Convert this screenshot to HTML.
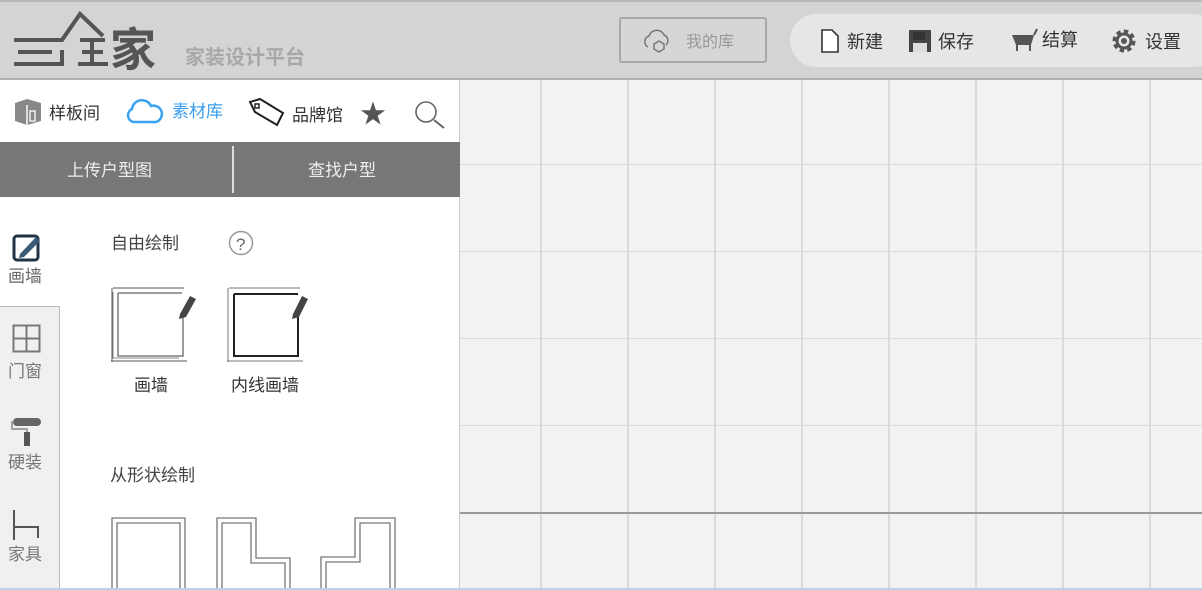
<!DOCTYPE html>
<html><head><meta charset="utf-8"><style>
*{margin:0;padding:0;box-sizing:border-box}
body{width:1202px;height:590px;overflow:hidden;position:relative;background:#f2f2f2;font-family:"Liberation Sans","Noto Sans CJK SC",sans-serif;}
.hdr{position:absolute;left:0;top:0;width:1202px;height:80px;background:#d4d4d4;border-top:2px solid #b8b8b8;border-bottom:2px solid #b0b0b0}
.canvas{position:absolute;left:460px;top:80px;right:0;bottom:2px;
background-image:linear-gradient(to right,#dadada 2px,transparent 2px),linear-gradient(to bottom,#dadada 1px,transparent 1px);
background-size:87px 87px;background-position:80px 84px}
.side{position:absolute;left:0;top:80px;width:460px;height:508px;background:#fff;border-right:1px solid #ccc}
.abs{position:absolute}
.t{position:absolute;white-space:nowrap;margin-top:-3px}
</style></head><body>
<div class="hdr"></div>
<svg class="abs" style="left:0;top:0" width="170" height="78">
<g stroke="#555" stroke-width="4" fill="none">
<path d="M14 40H62L80 14L103 36"/>
<path d="M18 52H52"/>
<path d="M14 64H62V50"/>
<path d="M80 40H105M82 52H103M78 64H108M92 40V64"/>
</g>
<text x="110" y="66" font-size="46" font-weight="bold" fill="#555" font-family="Noto Sans CJK SC">家</text>
</svg>
<div class="t" style="left:185px;top:44px;font-size:20px;font-weight:bold;color:#a8a8a8">家装设计平台</div>
<div class="abs" style="left:619px;top:17px;width:148px;height:46px;border:2px solid #a8a8a8;border-radius:3px;background:#d6d6d6"></div>
<svg class="abs" style="left:640px;top:27px" width="36" height="26"><path d="M8 20a6 6 0 0 1 1-11a8 8 0 0 1 15-1a6 6 0 0 1 2 10" fill="none" stroke="#777" stroke-width="1.5"/><path d="M19 14l5 3v5l-5 3l-5-3v-5z" fill="none" stroke="#777" stroke-width="1.5"/></svg>
<div class="t" style="left:686px;top:31px;font-size:16px;color:#999">我的库</div>
<div class="abs" style="left:790px;top:14px;width:430px;height:53px;border-radius:27px;background:#e6e6e6"></div>
<svg class="abs" style="left:820px;top:28px" width="20" height="26"><path d="M2 2H12L18 8V24H2Z" fill="#fff" stroke="#333" stroke-width="1.6"/></svg>
<div class="t" style="left:847px;top:31px;font-size:18px;color:#333">新建</div>
<svg class="abs" style="left:908px;top:29px" width="24" height="24"><rect x="1" y="1" width="22" height="22" fill="#444"/><rect x="5" y="3" width="12" height="8" fill="#333"/><rect x="5" y="14" width="14" height="9" fill="#ddd"/></svg>
<div class="t" style="left:938px;top:31px;font-size:18px;color:#333">保存</div>
<svg class="abs" style="left:1010px;top:27px" width="30" height="26"><path d="M2 8H24L21 18H6Z" fill="#555"/><path d="M24 8L27 2" stroke="#555" stroke-width="2"/><path d="M7 18V24M20 18V24" stroke="#555" stroke-width="2"/></svg>
<div class="t" style="left:1042px;top:29px;font-size:18px;color:#333">结算</div>
<svg class="abs" style="left:1111px;top:28px" width="26" height="26"><circle cx="13" cy="13" r="9" fill="none" stroke="#555" stroke-width="5" stroke-dasharray="4 3"/><circle cx="13" cy="13" r="7" fill="none" stroke="#555" stroke-width="3"/><circle cx="13" cy="13" r="3" fill="#555"/></svg>
<div class="t" style="left:1145px;top:31px;font-size:18px;color:#333">设置</div>

<div class="canvas"></div>
<div class="abs" style="left:460px;top:512px;width:742px;height:2px;background:#999"></div>
<div class="side"></div>
<svg class="abs" style="left:13px;top:97px" width="30" height="30"><path d="M2 6L14 2L28 6V24L14 28L2 24Z" fill="#888"/><path d="M14 8V28" stroke="#ddd" stroke-width="2"/><rect x="17" y="14" width="5" height="10" fill="none" stroke="#eee" stroke-width="1.5"/></svg>
<div class="t" style="left:49px;top:102px;font-size:17px;color:#333">样板间</div>
<svg class="abs" style="left:124px;top:96px" width="42" height="30"><path d="M9 26a7 7 0 0 1-1-13a10 10 0 0 1 19-3a8 8 0 0 1 5 16Z" fill="none" stroke="#3aa3f0" stroke-width="2.5"/></svg>
<div class="t" style="left:172px;top:100px;font-size:17px;color:#3a9ff0">素材库</div>
<svg class="abs" style="left:247px;top:97px" width="40" height="32"><path d="M3 5L13 2L36 16L30 28L8 15Z" fill="none" stroke="#222" stroke-width="2"/><rect x="8" y="7" width="4" height="4" fill="none" stroke="#222" stroke-width="1.5"/></svg>
<div class="t" style="left:292px;top:104px;font-size:17px;color:#333">品牌馆</div>
<div class="t" style="left:360px;top:97px;font-size:26px;color:#555">★</div>
<svg class="abs" style="left:411px;top:99px" width="36" height="30"><circle cx="15" cy="13" r="10" fill="none" stroke="#666" stroke-width="1.6"/><path d="M23 21L33 29" stroke="#666" stroke-width="2"/></svg>
<div class="abs" style="left:0;top:142px;width:460px;height:55px;background:#777"></div>
<div class="abs" style="left:232px;top:146px;width:2px;height:47px;background:#ddd"></div>
<div class="t" style="left:67px;top:159px;font-size:17px;color:#eee">上传户型图</div>
<div class="t" style="left:308px;top:159px;font-size:17px;color:#eee">查找户型</div>

<div class="abs" style="left:0;top:306px;width:60px;height:282px;background:#f0f0f0;border-top:1px solid #bbb;border-right:1px solid #bbb"></div>
<svg class="abs" style="left:12px;top:232px" width="30" height="30"><rect x="2" y="4" width="24" height="24" rx="3" fill="none" stroke="#234" stroke-width="3"/><path d="M8 22L24 5L28 9L12 25L7 26Z" fill="#3a5a78"/></svg>
<div class="t" style="left:8px;top:265px;font-size:17px;color:#666">画墙</div>
<svg class="abs" style="left:12px;top:324px" width="30" height="30"><rect x="1.5" y="1.5" width="26" height="26" fill="none" stroke="#777" stroke-width="2"/><path d="M14.5 1V28M1 14.5H28" stroke="#777" stroke-width="2"/></svg>
<div class="t" style="left:8px;top:360px;font-size:17px;color:#777">门窗</div>
<svg class="abs" style="left:10px;top:416px" width="34" height="32"><rect x="3" y="2" width="28" height="8" rx="4" fill="#666"/><path d="M4 6H2V13H17V16" fill="none" stroke="#888" stroke-width="1.5"/><rect x="14" y="16" width="6" height="14" fill="#555"/></svg>
<div class="t" style="left:8px;top:451px;font-size:17px;color:#777">硬装</div>
<svg class="abs" style="left:10px;top:508px" width="34" height="34"><path d="M4 2V32M4 19H28V30" fill="none" stroke="#555" stroke-width="2"/></svg>
<div class="t" style="left:8px;top:543px;font-size:17px;color:#777">家具</div>

<div class="t" style="left:111px;top:232px;font-size:17px;color:#444">自由绘制</div>
<svg class="abs" style="left:228px;top:230px" width="28" height="28"><circle cx="13" cy="13" r="11.5" fill="none" stroke="#999" stroke-width="1.5"/><text x="8" y="20" font-size="17" fill="#666" font-family="Liberation Sans">?</text></svg>
<svg class="abs" style="left:110px;top:286px" width="92" height="78">
<path d="M3 2H74M2 2V76M1 75H77" stroke="#555" stroke-width="1"/>
<path d="M8 7H72M8 7V70H73V30" fill="none" stroke="#666" stroke-width="1.3"/>
<path d="M3 6V72H69" fill="none" stroke="#888" stroke-width="1"/>
<path d="M70 28L80 10L86 13L76 31L69 33Z" fill="#444"/>
</svg>
<svg class="abs" style="left:226px;top:286px" width="92" height="78">
<path d="M3 2H74M2 2V76M1 75H77" stroke="#777" stroke-width="1"/>
<path d="M8 8H72M8 8V70H72V28" fill="none" stroke="#222" stroke-width="2"/>
<path d="M67 28L76 10L82 13L73 31L66 33Z" fill="#444"/>
</svg>
<div class="t" style="left:134px;top:374px;font-size:17px;color:#333">画墙</div>
<div class="t" style="left:231px;top:374px;font-size:17px;color:#333">内线画墙</div>
<div class="t" style="left:110px;top:464px;font-size:17px;color:#444">从形状绘制</div>
<svg class="abs" style="left:110px;top:516px" width="300" height="72" fill="none" stroke="#777" stroke-width="1.3">
<path d="M2 72V2H75V72"/><path d="M7 72V7H70V72"/>
<path d="M107 72V2H146V42H180V72"/><path d="M112 72V7H141V47H175V72"/>
<path d="M211 72V41H245V2H285V72"/><path d="M216 72V46H250V7H280V72"/>
</svg>
<div class="abs" style="left:0;top:588px;width:1202px;height:2px;background:#b9d3ea"></div>
</body></html>
